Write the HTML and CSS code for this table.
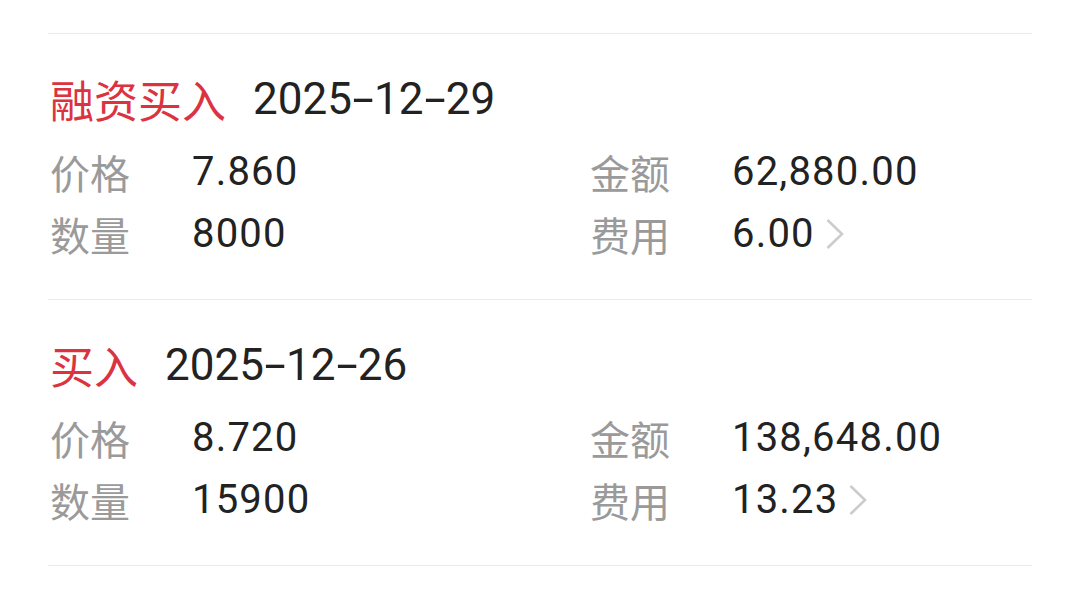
FILE: index.html
```html
<!DOCTYPE html>
<html lang="zh-CN">
<head>
<meta charset="utf-8">
<link rel="stylesheet" href="styles.css">
</head>
<body>
<div class="list">
  <section class="trade">
    <div class="title"><span class="type">融资买入</span><span class="date">2025<span class="dash">-</span>12<span class="dash">-</span>29</span></div>
    <div class="grid">
      <div class="cell"><span class="label">价格</span><span class="value">7.860</span></div>
      <div class="cell"><span class="label">金额</span><span class="value">62,880.00</span></div>
      <div class="cell"><span class="label">数量</span><span class="value">8000</span></div>
      <div class="cell"><span class="label">费用</span><span class="value">6.00</span><svg class="chev" viewBox="0 0 20 34" width="20" height="34"><path d="M2.5 3 L17 17 L2.5 31" fill="none" stroke="#cccccc" stroke-width="2.6"/></svg></div>
    </div>
  </section>
  <section class="trade">
    <div class="title"><span class="type">买入</span><span class="date">2025<span class="dash">-</span>12<span class="dash">-</span>26</span></div>
    <div class="grid">
      <div class="cell"><span class="label">价格</span><span class="value">8.720</span></div>
      <div class="cell"><span class="label">金额</span><span class="value">138,648.00</span></div>
      <div class="cell"><span class="label">数量</span><span class="value">15900</span></div>
      <div class="cell"><span class="label">费用</span><span class="value">13.23</span><svg class="chev" viewBox="0 0 20 34" width="20" height="34"><path d="M2.5 3 L17 17 L2.5 31" fill="none" stroke="#cccccc" stroke-width="2.6"/></svg></div>
    </div>
  </section>
  <div class="endline"></div>
</div>
</body>
</html>
```
FILE: styles.css
```css
html, body {
  margin: 0;
  padding: 0;
  background: #ffffff;
}
body {
  font-family: Roboto, "Noto Sans CJK SC", sans-serif;
  color: #222222;
}
.list {
  margin: 33px 48px 0 48px;
  width: 984px;
}
.trade {
  border-top: 1px solid #ebebeb;
  padding: 35px 0 34px 2px;
}
.endline {
  border-top: 1px solid #ebebeb;
}
.title {
  display: flex;
  align-items: center;
  height: 60px;
  margin-bottom: 12px;
}
.type {
  font-family: "Noto Sans CJK SC", sans-serif;
  font-size: 44px;
  color: #dc3340;
  margin-right: 27px;
  line-height: 60px;
}
.date {
  font-family: Roboto, sans-serif;
  font-size: 44px;
  color: #222222;
  line-height: 60px;
  font-weight: 400;
}
.dash {
  display: inline-block;
  transform: scaleX(1.75);
  margin: 0 5px;
}
.grid {
  display: grid;
  grid-template-columns: 540px 1fr;
  grid-auto-rows: 62px;
}
.cell {
  display: flex;
  align-items: center;
}
.label {
  font-family: "Noto Sans CJK SC", sans-serif;
  font-size: 40px;
  color: #9a9a9a;
  width: 142px;
  line-height: 62px;
}
.value {
  font-family: Roboto, sans-serif;
  font-size: 40px;
  font-weight: 400;
  letter-spacing: 1.2px;
  color: #222222;
  line-height: 62px;
}
.chev {
  margin-left: 10px;
  display: block;
}
```
